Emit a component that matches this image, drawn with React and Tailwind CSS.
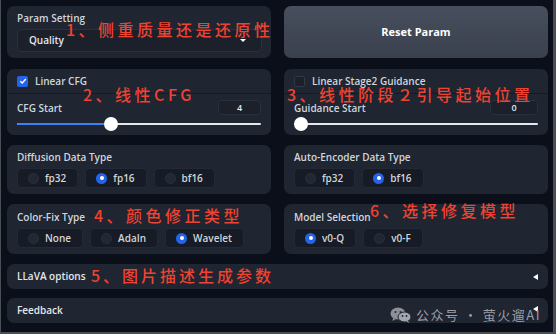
import React from 'react';

const Panel = ({ className = '', children }) => (
    <div className={`rounded-[7px] bg-[#1f2531] ${className}`}>{children}</div>
);

const Label = ({ children }) => (
    <div className="text-[10px] leading-[10px] font-semibold text-[#d1d5db]">{children}</div>
);

const Radio = ({ label, checked }) => (
    <div className="flex items-center h-[20px] gap-[6px] pl-[10px] pr-[11px] rounded-[5px] bg-[#161b25] border border-[#232a36]">
        {checked ? (
            <span className="w-[11px] h-[11px] rounded-full bg-[#2563eb] flex items-center justify-center">
                <span className="w-[4px] h-[4px] rounded-full bg-white" />
            </span>
        ) : (
            <span className="w-[11px] h-[11px] rounded-full bg-[#222833] border border-[#2a303c]" />
        )}
        <span className="text-[10px] font-semibold text-[#d1d5db]">{label}</span>
    </div>
);

const Slider = ({ pct }) => (
    <div className="relative h-[14px] mt-[2px] flex items-center">
        <div className="w-full h-[2px] bg-[#e5e7eb] rounded-full" />
        <div className="absolute left-0 h-[2px] bg-[#3b82f6] rounded-full" style={{ width: `${pct}%` }} />
        <div
            className="absolute w-[14px] h-[14px] rounded-full bg-white -translate-x-1/2"
            style={{ left: `calc(${pct}% + 7px * ${(50 - pct) / 50})` }}
        />
    </div>
);

const Red = ({ className, children }) => (
    <div className={`absolute text-[16px] leading-[16px] tracking-[3.5px] font-medium text-[#ee4330] whitespace-nowrap font-['Noto_Sans_CJK_SC',sans-serif] ${className}`}>
        {children}
    </div>
);

const WeChat = () => (
    <svg width="22" height="16" viewBox="0 0 22 16">
        <ellipse cx="8" cy="6.5" rx="7.5" ry="6" fill="#8d9099" />
        <path d="M3 11 L2.5 14 L6 12 Z" fill="#8d9099" />
        <circle cx="5.5" cy="5" r="1" fill="#1f2531" />
        <circle cx="10.5" cy="5" r="1" fill="#1f2531" />
        <ellipse cx="14.5" cy="10" rx="6.5" ry="5" fill="#a3a6ae" stroke="#1f2531" strokeWidth="1" />
        <path d="M18 14 L19.5 16 L16 14.5 Z" fill="#a3a6ae" />
        <circle cx="12.5" cy="9" r="0.9" fill="#1f2531" />
        <circle cx="16.5" cy="9" r="0.9" fill="#1f2531" />
    </svg>
);

const App = () => {
    return (
        <div className="relative w-[556px] h-[334px] overflow-hidden bg-[#0b0f19] border-l border-r-[3px] border-b-2 border-[#4a4e57] font-['Open_Sans',sans-serif]">
            <div className="flex flex-col gap-[10px] pl-[6px] pr-[5px] pt-[6px]">
                {/* Param setting + reset */}
                <div className="grid grid-cols-2 gap-[13px]">
                    <Panel className="h-[52px] px-[10px] pt-[7px]">
                        <Label>Param Setting</Label>
                        <div className="mt-[6px] h-[23px] w-[245px] rounded-[5px] bg-[#1b202b] border border-[#2a303c] flex items-center justify-between pl-[11px] pr-[15px]">
                            <span className="text-[10px] font-semibold text-[#e5e7eb]">Quality</span>
                            <span className="w-0 h-0 border-l-[3px] border-r-[3px] border-t-[3px] border-l-transparent border-r-transparent border-t-white" />
                        </div>
                    </Panel>
                    <button className="h-[52px] rounded-[7px] bg-linear-to-b from-[#474e5d] to-[#3a404d] text-[11px] font-bold text-white">
                        Reset Param
                    </button>
                </div>

                {/* Linear CFG / Stage2 guidance */}
                <div className="grid grid-cols-2 gap-[13px] mt-[1px]">
                    <Panel className="h-[66px] overflow-hidden">
                        <div className="h-[24px] flex items-center gap-[7px] px-[10px]">
                            <span className="w-[11px] h-[11px] rounded-[2px] bg-[#2563eb] flex items-center justify-center">
                                <svg width="8" height="8" viewBox="0 0 8 8">
                                    <path d="M1.3 4.2 L3.2 6 L6.8 2" stroke="white" strokeWidth="1.4" fill="none" />
                                </svg>
                            </span>
                            <span className="text-[10px] font-semibold text-[#d1d5db]">Linear CFG</span>
                        </div>
                        <div className="h-px bg-[#151a24]" />
                        <div className="px-[10px] pt-[6px]">
                            <div className="flex items-center justify-between h-[15px]">
                                <Label>CFG Start</Label>
                                <div className="w-[43px] h-[15px] rounded-[4px] border border-[#2a303c] bg-[#1b202b] flex items-center justify-center text-[9px] font-semibold text-[#e5e7eb]">4</div>
                            </div>
                            <Slider pct={38} />
                        </div>
                    </Panel>
                    <Panel className="h-[66px] overflow-hidden">
                        <div className="h-[24px] flex items-center gap-[7px] px-[10px]">
                            <span className="w-[11px] h-[11px] rounded-[2px] bg-[#1b202b] border border-[#323846]" />
                            <span className="text-[10px] font-semibold text-[#d1d5db]">Linear Stage2 Guidance</span>
                        </div>
                        <div className="h-px bg-[#151a24]" />
                        <div className="px-[10px] pt-[6px]">
                            <div className="flex items-center justify-between h-[15px]">
                                <Label>Guidance Start</Label>
                                <div className="w-[48px] h-[15px] rounded-[4px] border border-[#2a303c] bg-[#1b202b] flex items-center justify-center text-[9px] font-semibold text-[#e5e7eb]">0</div>
                            </div>
                            <Slider pct={0} />
                        </div>
                    </Panel>
                </div>

                {/* Data types */}
                <div className="grid grid-cols-2 gap-[13px]">
                    <Panel className="h-[49px] px-[10px] pt-[7px]">
                        <Label>Diffusion Data Type</Label>
                        <div className="mt-[6px] flex gap-[7px]">
                            <Radio label="fp32" />
                            <Radio label="fp16" checked />
                            <Radio label="bf16" />
                        </div>
                    </Panel>
                    <Panel className="h-[49px] px-[10px] pt-[7px]">
                        <Label>Auto-Encoder Data Type</Label>
                        <div className="mt-[6px] flex gap-[7px]">
                            <Radio label="fp32" />
                            <Radio label="bf16" checked />
                        </div>
                    </Panel>
                </div>

                {/* Color fix / model */}
                <div className="grid grid-cols-2 gap-[13px]">
                    <Panel className="h-[50px] px-[10px] pt-[8px]">
                        <Label>Color-Fix Type</Label>
                        <div className="mt-[6px] flex gap-[7px]">
                            <Radio label="None" />
                            <Radio label="AdaIn" />
                            <Radio label="Wavelet" checked />
                        </div>
                    </Panel>
                    <Panel className="h-[50px] px-[10px] pt-[8px]">
                        <Label>Model Selection</Label>
                        <div className="mt-[6px] flex gap-[7px]">
                            <Radio label="v0-Q" checked />
                            <Radio label="v0-F" />
                        </div>
                    </Panel>
                </div>

                {/* Accordions */}
                <Panel className="h-[25px] flex items-center justify-between px-[10px]">
                    <span className="text-[10px] font-semibold text-[#e5e7eb]">LLaVA options</span>
                    <span className="w-0 h-0 border-t-[3px] border-b-[3px] border-r-[5px] border-t-transparent border-b-transparent border-r-white" />
                </Panel>
                <Panel className="h-[25px] -mt-px flex items-center justify-between px-[10px]">
                    <span className="text-[10px] font-semibold text-[#e5e7eb]">Feedback</span>
                    <span className="w-0 h-0 -mt-[4px] border-t-[3px] border-b-[3px] border-r-[5px] border-t-transparent border-b-transparent border-r-white" />
                </Panel>
            </div>

            {/* annotations */}
            <Red className="left-[65px] top-[21px]">1、侧重质量还是还原性</Red>
            <Red className="left-[82px] top-[86px]">2、线性CFG</Red>
            <Red className="left-[286px] top-[86px]">3、线性阶段２引导起始位置</Red>
            <Red className="left-[93px] top-[207px]">4、颜色修正类型</Red>
            <Red className="left-[90px] top-[267px] tracking-[3px]">5、图片描述生成参数</Red>
            <Red className="left-[369px] top-[202px]">6、选择修复模型</Red>

            <div className="absolute left-[389px] top-[307px] flex items-center gap-[4px] text-[13px] leading-[16px] tracking-[1.5px] text-[#9a9da5] font-['Noto_Sans_CJK_SC',sans-serif]">
                <WeChat />
                <span>公众号 · 萤火遛AI</span>
            </div>
        </div>
    );
};

export default App;
